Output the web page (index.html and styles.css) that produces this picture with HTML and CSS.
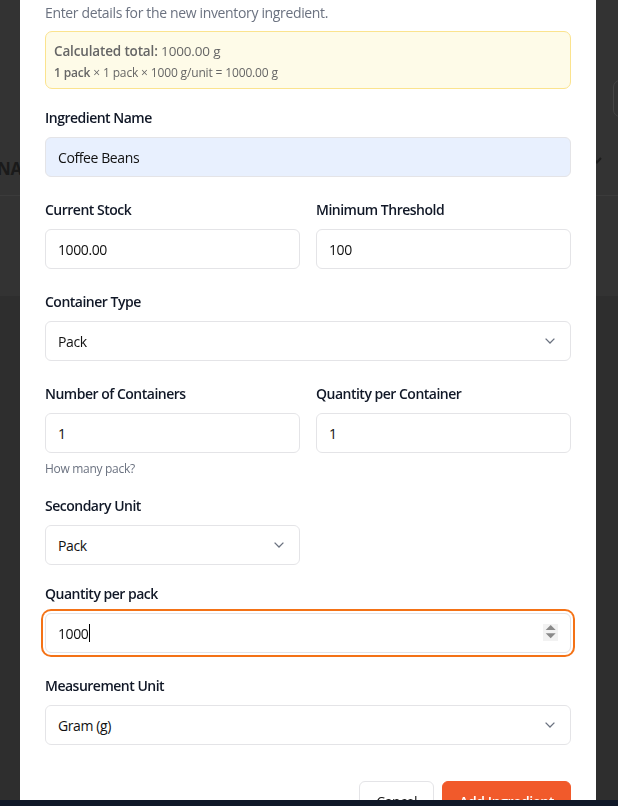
FILE: index.html
```html
<!DOCTYPE html>
<html lang="en">
<head>
<meta charset="utf-8">
<title>Add Ingredient</title>
<link rel="stylesheet" href="styles.css">
</head>
<body>
<div class="page">
  <div class="page-top">
    <div class="page-toolbar"><div class="page-search"></div></div>
    <div class="page-head">
      <span class="page-title">NAME</span>
      <svg class="page-chev" width="10" height="7" viewBox="0 0 10 7"><polyline points="1,1 5,5.5 9,1" fill="none" stroke="#1d1d1d" stroke-width="2"/></svg>
    </div>
  </div>
  <div class="page-band"></div>
  <div class="page-rest"></div>
</div>

<div class="overlay">
  <div class="modal">
    <p class="desc">Enter details for the new inventory ingredient.</p>

    <div class="calc">
      <div class="calc-total"><strong>Calculated total:</strong> 1000.00 g</div>
      <div class="calc-formula"><strong>1 pack</strong> × 1 pack × 1000 g/unit = 1000.00 g</div>
    </div>

    <div class="field mt-19">
      <div class="label">Ingredient Name</div>
      <div class="input autofill">Coffee Beans</div>
    </div>

    <div class="row mt-23">
      <div class="field">
        <div class="label">Current Stock</div>
        <div class="input">1000.00</div>
      </div>
      <div class="field">
        <div class="label">Minimum Threshold</div>
        <div class="input">100</div>
      </div>
    </div>

    <div class="field mt-23">
      <div class="label">Container Type</div>
      <div class="input select">
        <span>Pack</span>
        <svg class="chev" width="10" height="6" viewBox="0 0 10 6"><polyline points="0.6,0.6 5,5 9.4,0.6" fill="none" stroke="#6b7280" stroke-width="1.3"/></svg>
      </div>
    </div>

    <div class="row mt-23">
      <div class="field">
        <div class="label">Number of Containers</div>
        <div class="input">1</div>
        <div class="helper">How many pack?</div>
      </div>
      <div class="field">
        <div class="label">Quantity per Container</div>
        <div class="input">1</div>
      </div>
    </div>

    <div class="row mt-19">
      <div class="field">
        <div class="label">Secondary Unit</div>
        <div class="input select">
          <span>Pack</span>
          <svg class="chev" width="10" height="6" viewBox="0 0 10 6"><polyline points="0.6,0.6 5,5 9.4,0.6" fill="none" stroke="#6b7280" stroke-width="1.3"/></svg>
        </div>
      </div>
      <div class="field"></div>
    </div>

    <div class="field mt-19">
      <div class="label">Quantity per pack</div>
      <div class="input focused">
        <span class="value">1000</span><span class="caret"></span>
        <svg class="spin" width="15" height="17" viewBox="0 0 15 17"><rect width="15" height="17" fill="#f2f2f2"/><polygon points="2.7,6 7.7,1 12.7,6" fill="#8a8a8a"/><polygon points="2.7,9.3 12.7,9.3 7.7,14.3" fill="#8a8a8a"/></svg>
      </div>
    </div>

    <div class="field mt-23">
      <div class="label">Measurement Unit</div>
      <div class="input select">
        <span>Gram (g)</span>
        <svg class="chev" width="10" height="6" viewBox="0 0 10 6"><polyline points="0.6,0.6 5,5 9.4,0.6" fill="none" stroke="#6b7280" stroke-width="1.3"/></svg>
      </div>
    </div>

    <div class="actions">
      <button class="btn btn-outline" type="button">Cancel</button>
      <button class="btn btn-primary" type="button">Add Ingredient</button>
    </div>
  </div>
</div>

<div class="taskbar"></div>
</body>
</html>
```
FILE: styles.css
```css
* { box-sizing: border-box; }

html, body {
  margin: 0;
  height: 806px;
  overflow: hidden;
}

body {
  font-family: "Open Sans", "Noto Sans", "Liberation Sans", sans-serif;
  background: #2e2e2e;
  color: #111827;
  letter-spacing: -0.4px;
}

/* page behind the dialog, as seen through the dark overlay */
.page {
  display: flex;
  flex-direction: column;
}
.page-top {
  height: 196px;
  background: #333333;
  border-bottom: 1px solid #3b3b3b;
  display: flex;
  flex-direction: column;
}
.page-toolbar {
  height: 130px;
  padding-top: 80px;
  display: flex;
  justify-content: flex-end;
}
.page-search {
  width: 40px;
  height: 37px;
  margin-right: -35px;
  border: 1px solid #444444;
  border-radius: 7px;
}
.page-head {
  display: flex;
  justify-content: space-between;
  align-items: flex-start;
  padding-right: 16px;
}
.page-title {
  margin-left: -3px;
  margin-top: 27px;
  font-weight: 700;
  font-size: 17px;
  color: #1a1a1a;
}
.page-chev {
  margin-top: 27px;
}
.page-band {
  height: 100px;
  background: #333333;
}
.page-rest {
  flex: 1;
  height: 510px;
  background: #2f2f2f;
}

/* dialog */
.overlay {
  position: fixed;
  inset: 0;
}
.modal {
  margin-left: 20px;
  width: 576px;
  height: 806px;
  background: #ffffff;
  padding: 3px 25px 0;
}

.desc {
  margin: 0;
  font-size: 14px;
  line-height: 20px;
  color: #6b7280;
  letter-spacing: -0.35px;
}

.calc {
  margin-top: 8px;
  background: #fefbe8;
  border: 1px solid #fbe38e;
  border-radius: 7px;
  padding: 9px 8px 7px;
  color: #666666;
}
.calc-total {
  font-size: 13.5px;
  line-height: 20px;
  letter-spacing: -0.15px;
}
.calc-formula {
  margin-top: 4px;
  font-size: 12px;
  line-height: 16px;
  letter-spacing: -0.15px;
}
.calc strong { font-weight: 600; }

.mt-19 { margin-top: 19px; }
.mt-23 { margin-top: 23px; }

.row {
  display: grid;
  grid-template-columns: 1fr 1fr;
  column-gap: 16px;
}

.field {
  display: flex;
  flex-direction: column;
}

.label {
  font-size: 14px;
  line-height: 20px;
  font-weight: 600;
  color: #111827;
  margin-bottom: 9px;
  letter-spacing: -0.5px;
}

.input {
  position: relative;
  height: 40px;
  border: 1px solid #e4e4e7;
  border-radius: 6px;
  background: #ffffff;
  padding: 0 12px;
  display: flex;
  align-items: center;
  font-size: 14px;
  color: #111111;
}
.autofill { background: #e8f0fe; }

.select { justify-content: space-between; padding-right: 15px; }

.focused {
  box-shadow: 0 0 0 2px #ffffff, 0 0 0 4px #f47216;
}
.caret {
  display: inline-block;
  width: 1px;
  height: 18px;
  background: #000000;
  margin-left: 1px;
}
.spin {
  position: absolute;
  right: 12px;
  top: 10px;
}

.helper {
  margin-top: 8px;
  font-size: 12px;
  line-height: 16px;
  color: #6b7280;
  letter-spacing: -0.3px;
}

.actions {
  margin-top: 36px;
  display: flex;
  justify-content: flex-end;
  gap: 8px;
}
.btn {
  height: 40px;
  padding: 0 16px;
  border-radius: 6px;
  font-family: inherit;
  font-size: 14px;
  font-weight: 500;
  letter-spacing: -0.4px;
}
.btn-outline {
  background: #ffffff;
  border: 1px solid #e4e4e7;
  color: #111111;
}
.btn-primary {
  background: #f15a2b;
  border: 1px solid #f15a2b;
  color: #ffffff;
  font-weight: 600;
}

.taskbar {
  position: fixed;
  left: 0;
  right: 0;
  bottom: 0;
  height: 6px;
  background: #101828;
}
```
